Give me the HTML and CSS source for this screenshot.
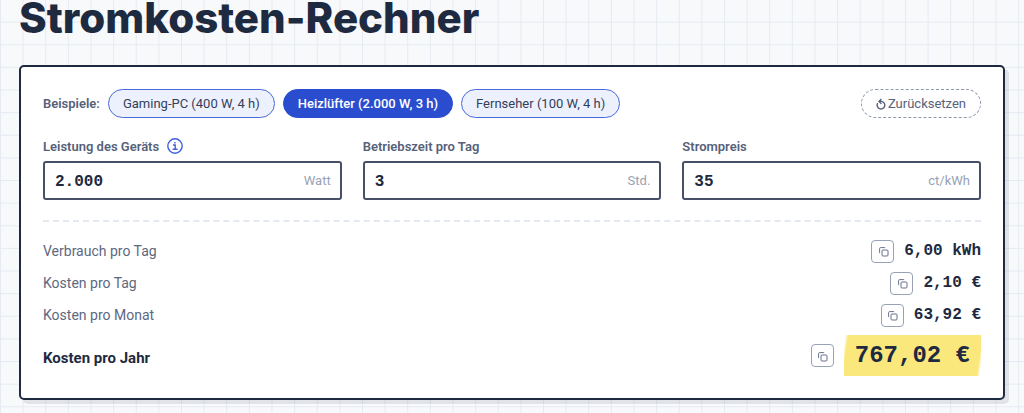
FILE: index.html
```html
<!DOCTYPE html>
<html lang="de">
<head>
  <meta charset="UTF-8">
  <meta name="viewport" content="width=device-width, initial-scale=1.0">
  <title>Stromkosten-Rechner</title>
  <link rel="stylesheet" href="styles.css">
</head>
<body>
  <svg class="sprite" aria-hidden="true">
    <symbol id="icon-copy" viewBox="0 0 12 12">
      <rect x="5" y="5" width="6" height="6" rx="1"/>
      <path d="M3 7.8H2.6V3.6a1 1 0 0 1 1-1H7.8V3"/>
    </symbol>
  </svg>

  <main>
    <h1>Stromkosten-Rechner</h1>

    <form class="card" id="calculator">
      <div class="presets">
        <span class="presets-label">Beispiele:</span>
        <button type="button" class="chip" data-watt="400" data-hours="4">Gaming-PC (400 W, 4 h)</button>
        <button type="button" class="chip active" data-watt="2000" data-hours="3">Heizlüfter (2.000 W, 3 h)</button>
        <button type="button" class="chip" data-watt="100" data-hours="4">Fernseher (100 W, 4 h)</button>
        <button type="reset" class="chip reset">
          <svg class="reset-icon" viewBox="0 0 10 12" aria-hidden="true">
            <path d="M1.7 5.2A3.8 3.8 0 1 0 5.6 3.4H3M5.4 1 3 3.4l2.4 2.4"/>
          </svg>
          <span>Zurücksetzen</span>
        </button>
      </div>

      <div class="fields">
        <div class="field">
          <div class="field-head">
            <label for="power">Leistung des Geräts</label>
            <button type="button" class="info" aria-label="Info zur Leistung">
              <svg viewBox="0 0 16 16" aria-hidden="true">
                <circle cx="8" cy="8" r="7.2"/>
                <path d="M6 7h2.2v4.2M5.6 11.2h5M7.9 4v1.4"/>
              </svg>
            </button>
          </div>
          <div class="input-box">
            <input type="text" id="power" inputmode="decimal" value="2.000">
            <span class="unit">Watt</span>
          </div>
        </div>
        <div class="field">
          <div class="field-head">
            <label for="hours">Betriebszeit pro Tag</label>
          </div>
          <div class="input-box">
            <input type="text" id="hours" inputmode="decimal" value="3">
            <span class="unit">Std.</span>
          </div>
        </div>
        <div class="field">
          <div class="field-head">
            <label for="price">Strompreis</label>
          </div>
          <div class="input-box">
            <input type="text" id="price" inputmode="decimal" value="35">
            <span class="unit">ct/kWh</span>
          </div>
        </div>
      </div>

      <div class="results">
        <div class="row">
          <span class="row-label">Verbrauch pro Tag</span>
          <button type="button" class="copy" aria-label="Verbrauch pro Tag kopieren"><svg><use href="#icon-copy"/></svg></button>
          <output class="value">6,00 kWh</output>
        </div>
        <div class="row">
          <span class="row-label">Kosten pro Tag</span>
          <button type="button" class="copy" aria-label="Kosten pro Tag kopieren"><svg><use href="#icon-copy"/></svg></button>
          <output class="value">2,10 €</output>
        </div>
        <div class="row">
          <span class="row-label">Kosten pro Monat</span>
          <button type="button" class="copy" aria-label="Kosten pro Monat kopieren"><svg><use href="#icon-copy"/></svg></button>
          <output class="value">63,92 €</output>
        </div>
        <div class="row total">
          <span class="row-label">Kosten pro Jahr</span>
          <button type="button" class="copy" aria-label="Kosten pro Jahr kopieren"><svg><use href="#icon-copy"/></svg></button>
          <output class="value">767,02 €</output>
        </div>
      </div>
    </form>
  </main>
</body>
</html>
```
FILE: styles.css
```css
* {
  box-sizing: border-box;
}
body {
  margin: 0;
  padding: 0 19px 13px;
  color: #1e2a40;
  font-family: Roboto, "Liberation Sans", sans-serif;
  font-size: 14px;
  background-color: #f8f9fb;
  /* Karopapier */
  background-image:
    linear-gradient(to right, #e6eaf2 1px, transparent 1px),
    linear-gradient(to top, #e6eaf2 1px, transparent 1px);
  background-size: 2.21vw 2.21vw;
}
button,
input {
  font-family: inherit;
}
button {
  cursor: pointer;
}
svg {
  fill: none;
  stroke: currentColor;
}
.sprite {
  display: none;
}
h1 {
  margin: 0 0 29px;
  font-family: Inter, "Liberation Sans", sans-serif;
  font-size: 42px;
  font-weight: 800;
  line-height: 36px;
}
.card {
  padding: 22px;
  background: #fff;
  border: 2px solid #1e2a40;
  border-radius: 5px;
  box-shadow: 4px 4px 0 rgba(30, 42, 64, 0.1);
}

/* Beispiele */
.presets {
  display: flex;
  flex-wrap: wrap;
  align-items: center;
  gap: 8px;
}
.presets-label,
label {
  color: #56617a;
  font-size: 13px;
  font-weight: 600;
}
.chip {
  height: 29px;
  padding: 0 14px;
  color: #34405a;
  font-size: 13px;
  background: #edf1fd;
  border: 1px solid #4a69dc;
  border-radius: 15px;
}
.chip.active {
  color: #fff;
  font-weight: 500;
  background: #2a4dd0;
  border-color: #2a4dd0;
}
.chip.reset {
  display: flex;
  align-items: center;
  gap: 2px;
  margin-left: auto;
  color: #56617a;
  background: none;
  border: 1px dashed #8d97ac;
}
.reset-icon {
  width: 10px;
  height: 12px;
  stroke-width: 1.4;
}

/* Eingaben */
.fields {
  display: grid;
  grid-template-columns: repeat(3, 1fr);
  gap: 21px;
  padding: 20px 0;
  border-bottom: 2px dashed #e4e8f0;
}
.field-head {
  display: flex;
  align-items: center;
  gap: 8px;
  height: 16px;
  margin-bottom: 7px;
}
.info {
  display: flex;
  padding: 0;
  color: #3f60dc;
  background: none;
  border: none;
}
.info svg {
  width: 16px;
  height: 16px;
  stroke-width: 1.4;
}
.input-box {
  display: flex;
  align-items: center;
  height: 39px;
  padding: 0 9px 0 10px;
  border: 2px solid #465168;
  border-radius: 3px;
}
.input-box input {
  flex: 1;
  min-width: 0;
  padding: 2px 0 0;
  color: #1e2a40;
  font-family: "Liberation Mono", monospace;
  font-size: 16px;
  font-weight: 700;
  background: none;
  border: none;
  outline: none;
}
.unit {
  color: #98a2b4;
  font-size: 13px;
}

/* Ergebnisse */
.results {
  display: flex;
  flex-direction: column;
  gap: 8px;
  padding-top: 17px;
}
.row {
  display: flex;
  align-items: center;
  gap: 10px;
  height: 24px;
}
.row-label {
  flex: 1;
  color: #5d6880;
}
.copy {
  display: flex;
  align-items: center;
  justify-content: center;
  width: 23px;
  height: 23px;
  padding: 0;
  color: #66718a;
  background: #fff;
  border: 1px solid #98a2b5;
  border-radius: 4px;
}
.copy svg {
  width: 12px;
  height: 12px;
}
.value {
  font-family: "Liberation Mono", monospace;
  font-size: 16px;
  font-weight: 700;
}
.total {
  height: 41px;
}
.total .row-label {
  padding-top: 5px;
  color: #1e2a40;
  font-size: 15px;
  font-weight: 700;
}
/* Textmarker */
.total .value {
  padding: 0 11px;
  font-size: 24px;
  line-height: 41px;
  background: linear-gradient(98deg, transparent 1%, #fbe87c 3%, #fbe87c 97%, transparent 99%);
}
```
